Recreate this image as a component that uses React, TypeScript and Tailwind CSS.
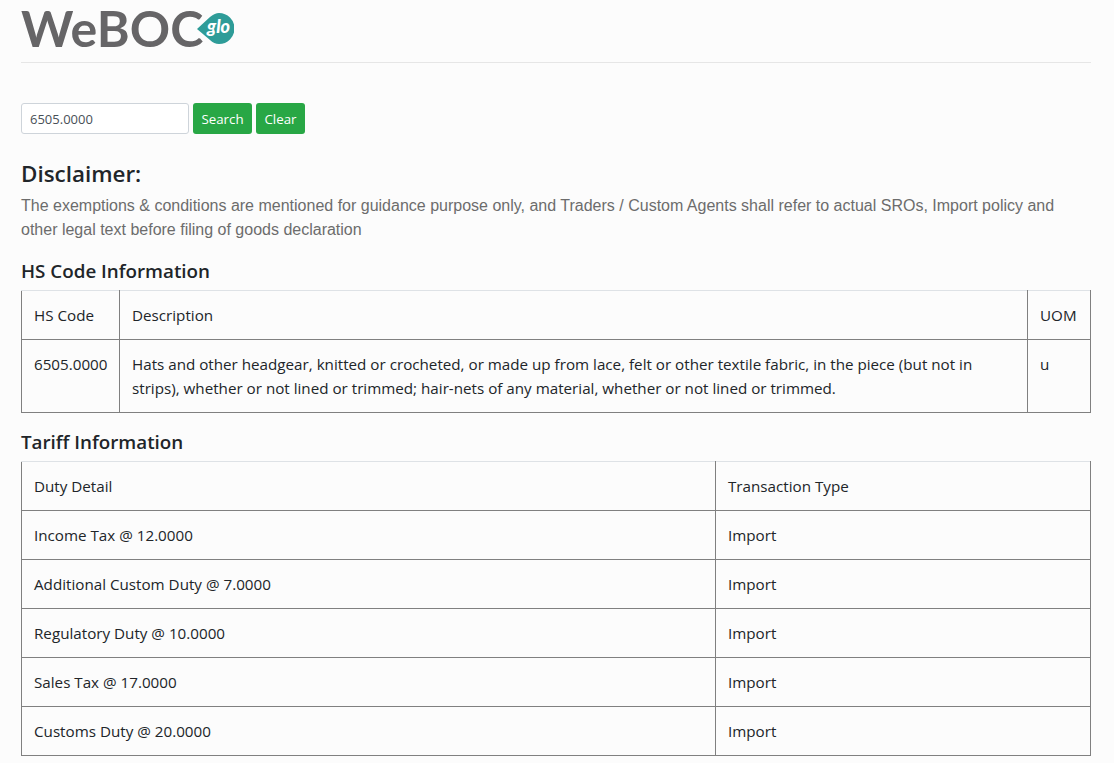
export default function App() {
  const tariff = [
    ["Income Tax @ 12.0000", "Import"],
    ["Additional Custom Duty @ 7.0000", "Import"],
    ["Regulatory Duty @ 10.0000", "Import"],
    ["Sales Tax @ 17.0000", "Import"],
    ["Customs Duty @ 20.0000", "Import"],
  ];
  const cell = "border border-[#808080] p-3 align-top font-normal text-left";
  const head = "border border-[#808080] border-t-[#dee2e6] p-3 align-top font-normal text-left";
  return (
    <div className="min-h-[763px] bg-[#fcfcfc] pl-[21px] pr-[23px] text-[15.2px] leading-6 text-[#212529] font-['Open_Sans','Noto_Sans',sans-serif]">
      <header className="h-[63px] border-b border-[#e6e6e6] flex items-start">
        <div className="relative h-[50px] w-[215px] pt-[1px]">
          <span className="block font-['Lato',sans-serif] font-bold text-[50px] leading-[54px] tracking-[0.1px] text-[#666567]">WeBOC</span>
          <div className="absolute left-[176px] top-[11px] w-[37px] h-[34px]">
            <svg width="37" height="34" viewBox="0 0 37 34" className="absolute inset-0">
              <path d="M0 18 L13 6 Q18 2 22 2 A15.5 15.5 0 1 1 22 33 Q17 33 13 29 Z" fill="#2e9c98" />
            </svg>
            <span className="absolute left-[10px] top-[2px] font-['Lato',sans-serif] italic font-black text-[18px] leading-[26px] text-white">glo</span>
          </div>
        </div>
      </header>
      <form className="mt-10 flex gap-1 h-[31px]">
        <input
          readOnly
          value="6505.0000"
          className="w-[168px] h-[31px] rounded-[3px] border border-[#ced4da] bg-white px-2 text-[13px] text-[#495057] outline-none"
        />
        <button type="button" className="h-[31px] w-[59px] rounded-[3px] bg-[#28a745] text-white text-[13.3px]">Search</button>
        <button type="button" className="h-[31px] w-[49px] rounded-[3px] bg-[#28a745] text-white text-[13.3px]">Clear</button>
      </form>
      <h3 className="mt-[25px] text-[22.4px] leading-[29px] font-semibold">Disclaimer:</h3>
      <p className="mt-[6px] font-['Liberation_Sans',sans-serif] text-[#6c6c6c] text-[16px] leading-6">
        The exemptions &amp; conditions are mentioned for guidance purpose only, and Traders / Custom Agents shall refer to actual SROs, Import policy and other legal text before filing of goods declaration
      </p>
      <h5 className="mt-[17px] text-[18.8px] leading-6 font-semibold">HS Code Information</h5>
      <table className="mt-[7px] w-full border-collapse table-fixed">
        <colgroup>
          <col className="w-[98px]" />
          <col />
          <col className="w-[63px]" />
        </colgroup>
        <tbody>
          <tr>
            <td className={head}>HS Code</td>
            <td className={head}>Description</td>
            <td className={head}>UOM</td>
          </tr>
          <tr>
            <td className={cell}>6505.0000</td>
            <td className={cell}>Hats and other headgear, knitted or crocheted, or made up from lace, felt or other textile fabric, in the piece (but not in strips), whether or not lined or trimmed; hair-nets of any material, whether or not lined or trimmed.</td>
            <td className={cell}>u</td>
          </tr>
        </tbody>
      </table>
      <h5 className="mt-[17px] text-[18.8px] leading-6 font-semibold">Tariff Information</h5>
      <table className="mt-[7px] w-full border-collapse table-fixed">
        <colgroup>
          <col className="w-[694px]" />
          <col />
        </colgroup>
        <tbody>
          <tr>
            <td className={head}>Duty Detail</td>
            <td className={head}>Transaction Type</td>
          </tr>
          {tariff.map(([d, t]) => (
            <tr key={d}>
              <td className={cell}>{d}</td>
              <td className={cell}>{t}</td>
            </tr>
          ))}
        </tbody>
      </table>
    </div>
  );
}
